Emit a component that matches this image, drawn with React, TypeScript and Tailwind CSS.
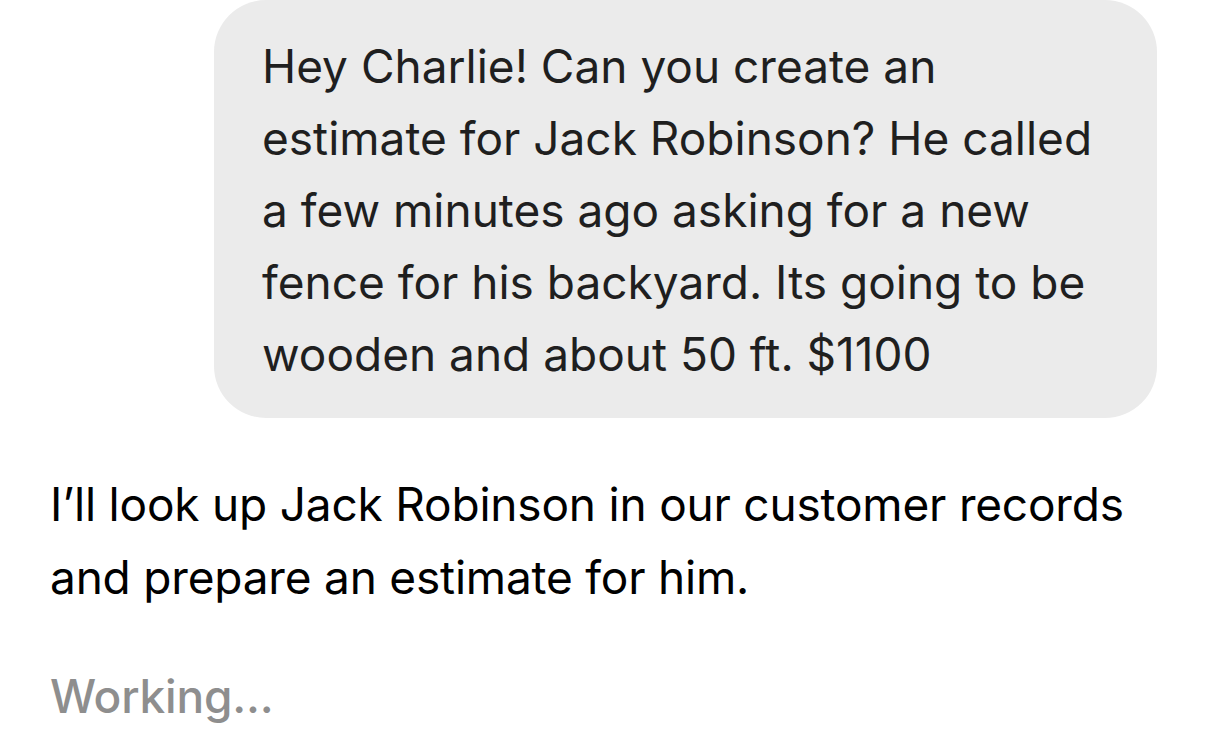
import React from "react";

export default function App() {
  return (
    <div
      className="min-h-screen w-[1206px] h-[732px] overflow-hidden bg-white"
      style={{ fontFamily: "Inter, 'Noto Sans', sans-serif" }}
    >
      <div className="flex justify-end pr-[49px]">
        <div className="w-[943px] rounded-[52px] bg-[#ebebeb] pl-[48px] pr-[40px] pt-[30px] pb-[28px] text-[46px] leading-[72px] text-[#1f1f1f] tracking-[0px]">
          Hey Charlie! Can you create an estimate for Jack Robinson? He called a few minutes ago asking for a new fence for his backyard. Its going to be wooden and about 50 ft. $1100
        </div>
      </div>
      <div className="pl-[50px] pr-[60px] pt-[50px] text-[46px] leading-[73px] text-black tracking-[-0.2px]">
        I’ll look up Jack Robinson in our customer records and prepare an estimate for him.
      </div>
      <div className="pl-[50px] pt-[46px] text-[46px] leading-[73px] font-medium text-[#8e8e8e] tracking-[-0.2px]">
        Working...
      </div>
    </div>
  );
}
